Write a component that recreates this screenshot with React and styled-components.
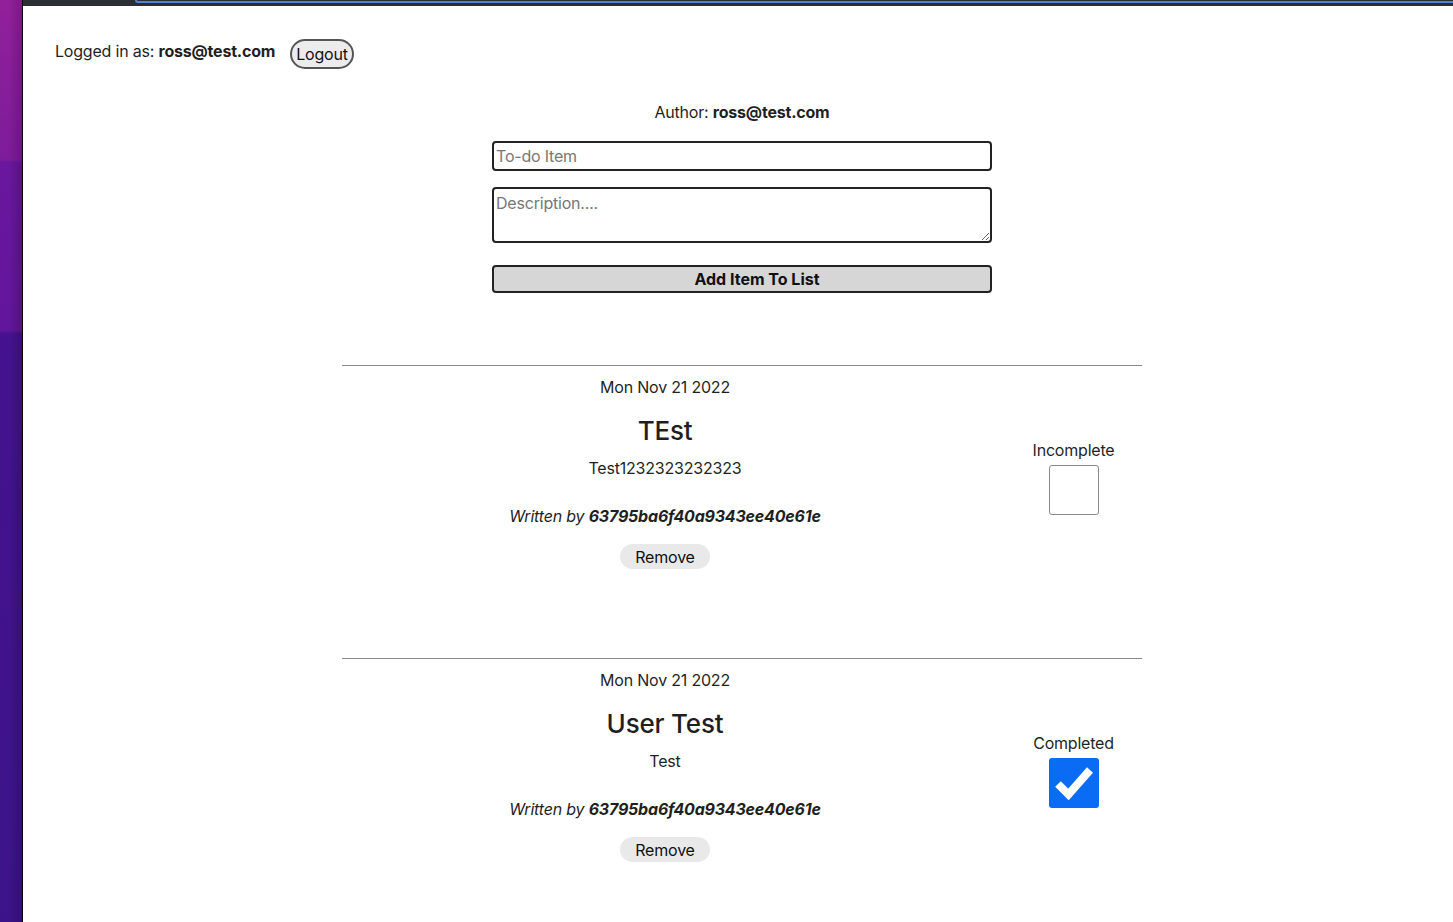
import React from 'react';
import styled, { createGlobalStyle } from 'styled-components';

const GlobalStyle = createGlobalStyle`
    html, body {
        margin: 0;
        padding: 0;
        background: #fff;
    }
    body {
        font-family: Inter, "Noto Sans", sans-serif;
        color: #1f1f1f;
        letter-spacing: -0.2px;
    }
`;

const Frame = styled.div`
    display: flex;
    height: 922px;
    overflow: hidden;
`;

const Desktop = styled.div`
    width: 22px;
    flex-shrink: 0;
    border-right: 1px solid #0b0410;
    background:
        linear-gradient(90deg, rgba(0, 0, 0, 0) 40%, rgba(0, 0, 0, 0.18) 100%),
        linear-gradient(180deg,
            #92209a 0px, #7d1c9a 160px,
            #6a179e 162px, #62169b 330px,
            #45128f 334px, #3c1489 922px);
`;

const Window = styled.div`
    flex: 1;
    display: flex;
    flex-direction: column;
    min-height: 0;
`;

const Chrome = styled.div`
    height: 6px;
    flex-shrink: 0;
    background: #2b2f33;
    display: flex;
    align-items: flex-start;
`;

const ChromeTab = styled.div`
    flex: 1;
    margin-left: 112px;
    height: 1px;
    border-bottom: 2px solid #4c86d6;
    border-left: 2px solid #4c86d6;
    border-bottom-left-radius: 10px;
`;

const Page = styled.div`
    flex: 1;
    padding-left: 8px;
`;

const Header = styled.div`
    display: flex;
    align-items: center;
    padding: 28px 0 0 24px;
    height: 34px;
    font-size: 16px;
`;

const Logout = styled.button`
    margin: 6px 0 0 15px;
    height: 30px;
    padding: 0 4px;
    font-family: Inter, sans-serif;
    font-size: 16px;
    letter-spacing: -0.2px;
    color: #111;
    background: #ececec;
    border: 2px solid #555;
    border-radius: 15px;
`;

const FormBlock = styled.form`
    width: 500px;
    margin: 0 auto;
    padding-top: 34px;
    display: flex;
    flex-direction: column;
`;

const Author = styled.div`
    text-align: center;
    font-size: 16px;
    line-height: 20px;
    margin-bottom: 19px;
`;

const Field = styled.input`
    box-sizing: border-box;
    width: 500px;
    height: 30px;
    border: 2px solid #222;
    border-radius: 4px;
    padding: 0 2px;
    font-family: Inter, sans-serif;
    font-size: 16px;
    letter-spacing: -0.2px;
    &::placeholder { color: #777; }
`;

const Area = styled.textarea`
    box-sizing: border-box;
    width: 500px;
    height: 56px;
    margin-top: 16px;
    border: 2px solid #222;
    border-radius: 4px;
    padding: 4px 2px;
    font-family: Inter, sans-serif;
    font-size: 16px;
    letter-spacing: -0.2px;
    &::placeholder { color: #777; }
`;

const Submit = styled.button`
    margin-top: 22px;
    height: 28px;
    width: 500px;
    padding: 0 0 0 30px;
    background: #d6d6d6;
    border: 2px solid #222;
    border-radius: 4px;
    font-family: Inter, sans-serif;
    font-weight: 700;
    font-size: 16px;
    color: #111;
`;

const List = styled.div`
    width: 800px;
    margin: 72px auto 0;
`;

const Item = styled.div`
    border-top: 1px solid #888;
    display: flex;
    height: 292px;
    align-items: flex-start;
`;

const Body = styled.div`
    width: 646px;
    display: flex;
    flex-direction: column;
    align-items: center;
    padding-top: 11px;
`;

const DateLine = styled.div`
    font-size: 16px;
    line-height: 20px;
`;

const Title = styled.h2`
    margin: 18px 0 0;
    font-size: 26px;
    font-weight: 500;
    line-height: 32px;
`;

const Desc = styled.div`
    margin-top: 11px;
    font-size: 16px;
    line-height: 20px;
`;

const Byline = styled.div`
    margin-top: 28px;
    font-size: 16px;
    line-height: 20px;
    font-style: italic;
    b { font-weight: 700; }
`;

const Remove = styled.button`
    margin-top: 18px;
    height: 25px;
    padding: 0 15px;
    border: none;
    border-radius: 13px;
    background: #e9e9e9;
    font-family: Inter, sans-serif;
    font-size: 16px;
    letter-spacing: -0.2px;
    color: #111;
`;

const Status = styled.div`
    flex: 1;
    padding-left: 17px;
    padding-top: 74px;
    display: flex;
    flex-direction: column;
    align-items: center;
    font-size: 16px;
    line-height: 20px;
`;

const Box = styled.div`
    box-sizing: border-box;
    margin-top: 5px;
    width: 50px;
    height: 50px;
    border-radius: 3px;
    border: ${p => (p.$checked ? 'none' : '1px solid #8a8a8a')};
    background: ${p => (p.$checked ? '#0a6cf5' : '#fff')};
    display: flex;
    align-items: center;
    justify-content: center;
`;

const todos = [
    { id: 1, date: 'Mon Nov 21 2022', title: 'TEst', desc: 'Test1232323232323', done: false },
    { id: 2, date: 'Mon Nov 21 2022', title: 'User Test', desc: 'Test', done: true }
];

function App() {
    return (
        <Frame>
            <GlobalStyle />
            <Desktop />
            <Window>
                <Chrome><ChromeTab /></Chrome>
                <Page>
                    <Header>
                        <span>Logged in as: <b>ross@test.com</b></span>
                        <Logout type="button">Logout</Logout>
                    </Header>
                    <FormBlock onSubmit={e => e.preventDefault()}>
                        <Author>Author: <b>ross@test.com</b></Author>
                        <Field placeholder="To-do Item" />
                        <Area placeholder="Description...." />
                        <Submit>Add Item To List</Submit>
                    </FormBlock>
                    <List>
                        {todos.map(todo => (
                            <Item key={todo.id}>
                                <Body>
                                    <DateLine>{todo.date}</DateLine>
                                    <Title>{todo.title}</Title>
                                    <Desc>{todo.desc}</Desc>
                                    <Byline>Written by <b>63795ba6f40a9343ee40e61e</b></Byline>
                                    <Remove type="button">Remove</Remove>
                                </Body>
                                <Status>
                                    {todo.done ? 'Completed' : 'Incomplete'}
                                    <Box $checked={todo.done}>
                                        {todo.done && (
                                            <svg width="50" height="50" viewBox="0 0 50 50">
                                                <path d="M9 26 L19.5 36.5 L41 12" fill="none" stroke="#fff" strokeWidth="8" />
                                            </svg>
                                        )}
                                    </Box>
                                </Status>
                            </Item>
                        ))}
                    </List>
                </Page>
            </Window>
        </Frame>
    );
}

export default App;
